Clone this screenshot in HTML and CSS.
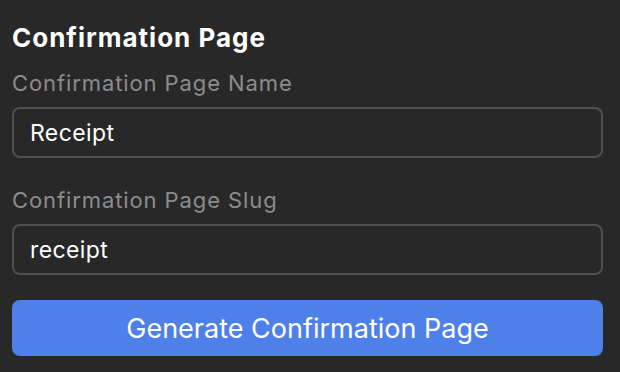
FILE: index.html
```html
<!DOCTYPE html>
<html lang="en">
<head>
<meta charset="UTF-8">
<meta name="viewport" content="width=device-width, initial-scale=1.0">
<title>Confirmation Page</title>
<link rel="stylesheet" href="styles.css">
</head>
<body>

<div class="panel">
    <h2 class="title">Confirmation Page</h2>

    <div class="field">
        <label for="pageName">Confirmation Page Name</label>
        <input type="text" id="pageName" value="Receipt">
    </div>

    <div class="field">
        <label for="pageSlug">Confirmation Page Slug</label>
        <input type="text" id="pageSlug" value="receipt">
    </div>

    <button class="generate">Generate Confirmation Page</button>
</div>

</body>
</html>
```

FILE: styles.css
```css
body {
    font-family: Inter, "Noto Sans", sans-serif;
    margin: 0;
    padding: 0;
    background-color: #282828;
}
.panel {
    padding: 22px 17px 0 12px;
    display: flex;
    flex-direction: column;
}
.title {
    margin: 0;
    font-size: 26px;
    line-height: 32px;
    font-weight: 700;
    letter-spacing: 1px;
    color: #fff;
}
.field {
    display: flex;
    flex-direction: column;
}
.field label {
    margin-top: 15px;
    font-size: 22px;
    line-height: 28px;
    letter-spacing: 0.9px;
    color: #8c8c8c;
}
.field input {
    margin-top: 10px;
    height: 51px;
    padding: 0 16px;
    box-sizing: border-box;
    background-color: #282828;
    border: 2px solid #505050;
    border-radius: 8px;
    color: #fff;
    font-family: inherit;
    font-size: 23px;
    letter-spacing: 0.4px;
    outline: none;
}
.field + .field label {
    margin-top: 28px;
}
.generate {
    margin-top: 25px;
    height: 56px;
    background-color: #4e80ea;
    color: #fff;
    border: none;
    border-radius: 8px;
    font-family: inherit;
    font-size: 27px;
    cursor: pointer;
}
```
